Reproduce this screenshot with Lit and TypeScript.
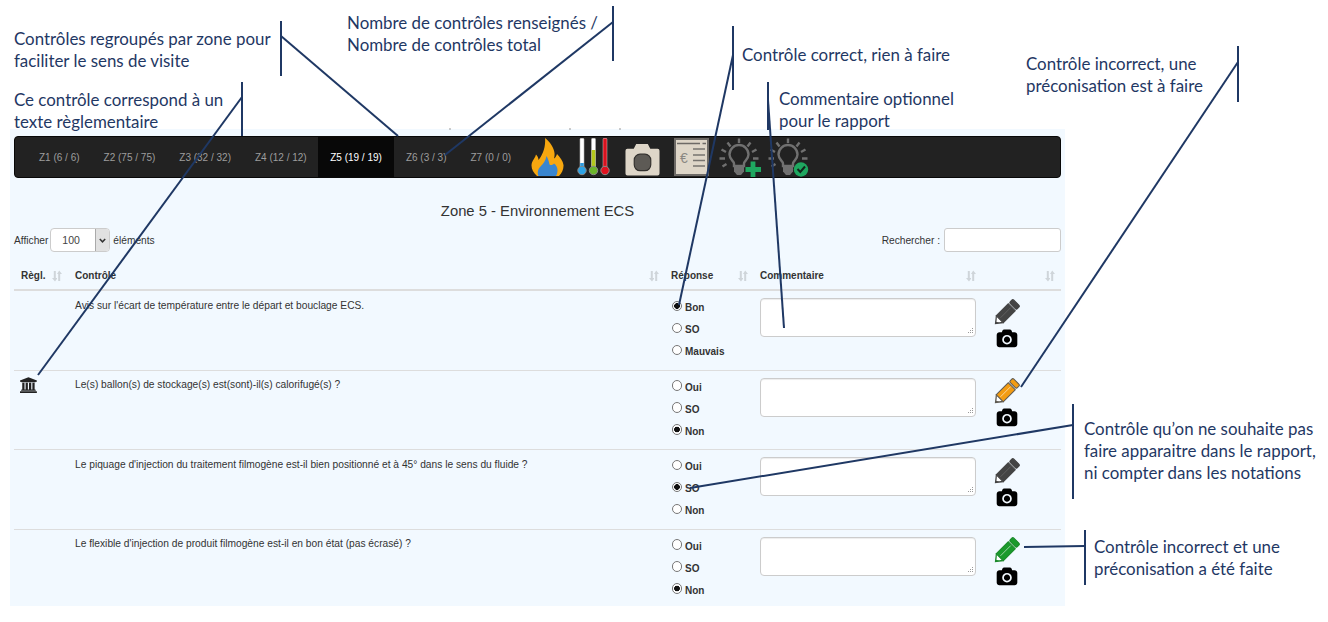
import { LitElement, html, css, svg } from "lit";
import { customElement } from "lit/decorators.js";

const TABS = [
  { label: "Z1 (6 / 6)" }, { label: "Z2 (75 / 75)" }, { label: "Z3 (32 / 32)" }, { label: "Z4 (12 / 12)" },
  { label: "Z5 (19 / 19)", active: true }, { label: "Z6 (3 / 3)" }, { label: "Z7 (0 / 0)" },
];

const ROWS = [
  { reg: false, text: "Avis sur l'écart de température entre le départ et bouclage ECS.", opts: ["Bon", "SO", "Mauvais"], sel: 0, pen: "dark" },
  { reg: true, text: "Le(s) ballon(s) de stockage(s) est(sont)-il(s) calorifugé(s) ?", opts: ["Oui", "SO", "Non"], sel: 2, pen: "orange" },
  { reg: false, text: "Le piquage d'injection du traitement filmogène est-il bien positionné et à 45° dans le sens du fluide ?", opts: ["Oui", "SO", "Non"], sel: 1, pen: "dark" },
  { reg: false, text: "Le flexible d'injection de produit filmogène est-il en bon état (pas écrasé) ?", opts: ["Oui", "SO", "Non"], sel: 2, pen: "green" },
];

const NOTES = [
  { x: 14, y: 28, lines: ["Contrôles regroupés par zone pour", "faciliter le sens de visite"] },
  { x: 14, y: 89, lines: ["Ce contrôle correspond à un", "texte règlementaire"] },
  { x: 347, y: 12, lines: ["Nombre de contrôles renseignés /", "Nombre de contrôles total"] },
  { x: 742, y: 44, lines: ["Contrôle correct, rien à faire"] },
  { x: 779, y: 88, lines: ["Commentaire optionnel", "pour le rapport"] },
  { x: 1026, y: 53, lines: ["Contrôle incorrect, une", "préconisation est à faire"] },
  { x: 1084, y: 418, lines: ["Contrôle qu’on ne souhaite pas", "faire apparaitre dans le rapport,", "ni compter dans les notations"] },
  { x: 1094, y: 536, lines: ["Contrôle incorrect et une", "préconisation a été faite"] },
];

const LEADERS: number[][] = [
  [242, 82, 242, 136], [242, 97, 38, 375],
  [281, 21, 281, 76], [281, 36, 398, 136],
  [613, 6, 613, 61], [613, 22, 445, 155],
  [733, 26, 733, 90], [733, 55, 679, 305],
  [768, 82, 768, 130], [768, 100, 784, 328],
  [1238, 46, 1238, 102], [1238, 62, 1021, 387],
  [1073, 404, 1073, 499], [1073, 425, 690, 488],
  [1085, 530, 1085, 585], [1085, 546, 1024, 547],
];

const sortIcon = html`<svg class="sort" viewBox="0 0 10 12" aria-hidden="true">
  <path d="M1.800 1v7H0L3 11.500 5 8.700V8H3.800V1zM6.200 11V4H5L7.200 .5 10 4H8.200v7z" fill="#cfd5da"/>
</svg>`;

const PEN_COLORS: Record<string, { fill: string; edge: string }> = {
  dark: { fill: "#444444", edge: "#444444" },
  orange: { fill: "#f39c12", edge: "#5e5a52" },
  green: { fill: "#1b9a2c", edge: "#1b8a2a" },
};

function pencil(kind: string) {
  const c = PEN_COLORS[kind];
  return html`<svg class="pen" viewBox="0 0 26 26" aria-hidden="true">
    <g transform="translate(.8 25.200) rotate(-45)">
      <path d="M0 0L7 -5.500V5.500Z" fill="${c.edge}"/>
      <path d="M2.800 -.4L7 -4V3.500L4.500 1.800Z" fill="#ffffff"/>
      <rect x="7" y="-5" width="17" height="10" fill="${c.fill}" stroke="${c.edge}" stroke-width="1"/>
      <path d="M8.500 -.5H23" stroke="${kind === "dark" ? "#707070" : "#ffffff"}" stroke-opacity=".6" stroke-width=".9"/>
      <rect x="25.500" y="-5" width="5" height="10" rx="1.500" fill="${c.fill}" stroke="${c.edge}" stroke-width="1"/>
    </g>
  </svg>`;
}

const camera = html`<svg class="cam" viewBox="0 0 2048 1792" aria-hidden="true">
  <path fill="#000" d="M1024 672q119 0 203.500 84.500t84.500 203.500-84.500 203.500-203.500 84.500-203.500-84.500-84.500-203.500 84.500-203.500 203.500-84.500zm704-416q106 0 181 75t75 181v896q0 106-75 181t-181 75h-1408q-106 0-181-75t-75-181v-896q0-106 75-181t181-75h224l51-136q19-49 69.500-84.500t103.500-35.500h512q53 0 103.500 35.500t69.500 84.500l51 136h224zm-704 1152q185 0 316.500-131.500t131.500-316.500-131.500-316.500-316.500-131.500-316.500 131.500-131.500 316.500 131.500 316.500 316.500 131.500z"/>
</svg>`;

const bank = html`<svg class="bank" viewBox="0 0 2048 1792" aria-hidden="true">
  <path fill="#222" d="M960 0l960 384v128h-128q0 26-20.500 45t-48.500 19h-1526q-28 0-48.500-19t-20.500-45h-128v-128zm-704 640h256v768h128v-768h256v768h128v-768h256v768h128v-768h256v768h59q28 0 48.500 19t20.500 45v64h-1664v-64q0-26 20.500-45t48.500-19h59v-768zm1595 960q28 0 48.500 19t20.500 45v128h-1920v-128q0-26 20.500-45t48.500-19h1782z"/>
</svg>`;

const flame = html`<svg class="ni" style="width:33px;height:38px" viewBox="0 0 33 38" aria-hidden="true">
  <path fill="#f7a70f" d="M6 38C1.500 34 -.5 29 1 24.500 2 21.500 4.500 19.500 5 16.500 6.500 18 7.500 20 7.500 22 11 18 15 10 14 0c5 4 9 9.500 9.500 15 .2 2 0 4-.5 5.500 1.500-.8 2.500-2.800 3-4.500 3 3 6 7 6.500 11 .3 4-1.500 8-4.500 11Z"/>
  <path fill="#3a86cf" d="M7.500 38C6 34.500 7 31 9.500 28.500c2.500-2.500 5-5.500 6-10.500 1.800 3 2.500 6 3 8.500 1.500 1 3.500 .5 4.500-1 2.200 1.500 3.500 4 3.500 6.500 0 2-.5 4.500-1.500 6Z"/>
</svg>`;

const thermo = html`<svg class="ni" style="width:34px;height:38px" viewBox="0 0 34 38" aria-hidden="true">
  ${[
    { x: 5, fillFrom: 25, fill: "#2d9be0", bulb: "#2da3e6" },
    { x: 16.500, fillFrom: 12, fill: "#b4c81c", bulb: "#6bb52a" },
    { x: 28, fillFrom: 0.500, fill: "#d8121f", bulb: "#e0121f" },
  ].map(
    (t) => svg`
    <rect x="${t.x - 2.400}" y="0" width="4.800" height="31" rx="1.500" fill="#8a8a8a"/>
    <rect x="${t.x - 1.800}" y=".5" width="3.600" height="30" fill="#ffffff"/>
    <rect x="${t.x - 1.800}" y="${t.fillFrom}" width="3.600" height="${30.5 - t.fillFrom}" fill="${t.fill}"/>
    <circle cx="${t.x}" cy="32.500" r="4.200" fill="${t.bulb}" stroke="#8a8a8a" stroke-width="1"/>`
  )}
</svg>`;

const beigeCam = html`<svg class="ni" style="width:35px;height:33px" viewBox="0 0 36 33" aria-hidden="true">
  <path fill="#ded6c8" d="M2.500 5.500H9L11.500.5H23.500L26 5.500H33.500Q35.500 5.500 35.500 7.500V31Q35.500 33 33.500 33H2.500Q.5 33 .5 31V7.500Q.5 5.500 2.500 5.500Z"/>
  <rect x="9.500" y="11" width="17" height="17" rx="6" fill="#5d5a55" stroke="#33312e" stroke-width="1.200"/>
</svg>`;

const invoice = html`<svg class="ni" style="width:35px;height:38px" viewBox="0 0 35 38" aria-hidden="true">
  <rect x="1" y="1" width="33" height="36" fill="#ded6c8" stroke="#6d6a66" stroke-width="2"/>
  <path d="M3 5.500H26M28.500 5.500H32" stroke="#6d6a66" stroke-width="1.600" fill="none"/>
  <path d="M19 11H31M19 17H31M19 22.500H31M19 28H31" stroke="#77746f" stroke-width="1.600" fill="none"/>
  <text x="6" y="25" font-family="Liberation Sans, sans-serif" font-size="14" fill="#8a8782">€</text>
</svg>`;

const bulbBody = svg`
  <path d="M15 28V25.500C15 23 10.500 21.500 10.500 16.500A9.500 9.500 0 0 1 29.500 16.500C29.500 21.500 25 23 25 25.500V28Z" fill="none" stroke="#707070" stroke-width="2.400"/>
  <path d="M15 29H25V33.500L22 37H18L15 33.500Z" fill="#707070"/>
  <path d="M20 .5V5M8.500 4.500L11.500 8.500M31.500 4.500L28.500 8.500M2.500 11.500L7 14M37.500 11.500L33 14M.5 20.500H6M34 20.500H39.500M3.500 28.500L7.500 26" stroke="#707070" stroke-width="2.400" fill="none"/>
`;

const bulbPlus = html`<svg class="ni" style="width:43px;height:39px" viewBox="0 0 43 39" aria-hidden="true">
  ${bulbBody}
  <path d="M34 23.500V39M26.500 31.500H42" stroke="#1fa760" stroke-width="4.800" fill="none"/>
</svg>`;

const bulbCheck = html`<svg class="ni" style="width:41px;height:39px" viewBox="0 0 41 39" aria-hidden="true">
  ${bulbBody}
  <circle cx="33" cy="31.500" r="7.200" fill="#1fa760"/>
  <path d="M29.500 31L32.300 34 37 28.500" stroke="#12261c" stroke-width="2" fill="none"/>
</svg>`;

const grip = html`<svg class="grip" viewBox="0 0 7 7" aria-hidden="true">
  <path d="M5 0h1v1H5zM3 2h1v1H3zM5 2h1v1H5zM1 4h1v1H1zM3 4h1v1H3zM5 4h1v1H5z" fill="#9a9a9a"/>
</svg>`;

@customElement("app-root")
export class AppRoot extends LitElement {
  static styles = css`
    :host {
      display: block;
      position: relative;
      width: 1328px;
      height: 622px;
      overflow: hidden;
      background: #fff;
      font-family: "Liberation Sans", Arial, sans-serif;
      font-size: 10px;
      color: #333;
    }
    .page { padding: 129px 0 0 10px; }
    .panel {
      width: 1055px;
      height: 477px;
      box-sizing: border-box;
      padding: 7px 4px 0;
      background: #f2f9ff;
    }
    .nav {
      display: flex;
      align-items: center;
      height: 42px;
      box-sizing: border-box;
      background: #222;
      border: 1px solid #080808;
      border-radius: 4px;
      padding-left: 12px;
    }
    .tab {
      display: flex;
      align-items: center;
      align-self: stretch;
      padding: 0 12px;
      color: #9d9d9d;
      white-space: nowrap;
    }
    .tab.active { background: #080808; color: #fff; }
    .tab:nth-child(5) { margin-left: -0.500px; }
    .tools { display: flex; align-items: center; margin-left: 7.500px; }
    .ni { display: block; flex: none; }
    .tools .ni:nth-child(2) { margin-left: 13px; }
    .tools .ni:nth-child(3) { margin-left: 14px; margin-top: 4px; }
    .tools .ni:nth-child(4) { margin-left: 14px; }
    .tools .ni:nth-child(5) { margin-left: 10px; }
    .tools .ni:nth-child(6) { margin-left: 6px; }
    h2 {
      margin: 25px 0 0;
      height: 16px;
      line-height: 16px;
      text-align: center;
      font-size: 14.800px;
      font-weight: 400;
      color: #333;
    }
    .filters {
      display: flex;
      justify-content: space-between;
      align-items: center;
      margin-top: 9px;
      height: 24px;
      font-size: 10.200px;
    }
    .group { display: flex; align-items: center; }
    .pick { position: relative; width: 60px; height: 24px; margin: 0 3px 0 2px; }
    select {
      appearance: none;
      width: 100%;
      height: 100%;
      box-sizing: border-box;
      border: 1px solid #ccc;
      border-radius: 4px;
      background: #fff;
      padding: 0 0 0 11px;
      font: 10.500px "Liberation Sans", Arial, sans-serif;
      color: #444;
    }
    .arrow {
      position: absolute;
      top: 1px;
      right: 1px;
      bottom: 1px;
      width: 13px;
      display: flex;
      align-items: center;
      justify-content: center;
      background: #e1e1e1;
      border-left: 1px solid #aaa;
      border-radius: 0 3px 3px 0;
      pointer-events: none;
    }
    .arrow svg { width: 7px; height: 5px; display: block; }
    .search {
      width: 117px;
      height: 24px;
      box-sizing: border-box;
      margin-left: 4px;
      border: 1px solid #ccc;
      border-radius: 3px;
      background: #fff;
    }
    .grid { display: grid; grid-template-columns: 61px 596px 89px 234px 67px; }
    .head {
      margin-top: 11px;
      height: 28px;
      box-sizing: border-box;
      border-bottom: 2px solid #ddd;
      font-weight: 700;
    }
    .th {
      display: flex;
      align-items: center;
      justify-content: space-between;
      padding: 0 12px 1px 0;
      height: 100%;
      box-sizing: border-box;
    }
    .th:first-child { padding-left: 7px; padding-right: 13px; }
    .th:nth-child(4) { padding-right: 18px; }
    .th:last-child { padding-right: 6px; }
    .sort { width: 10px; height: 12px; display: block; }
    .row {
      height: 79.500px;
      box-sizing: border-box;
      border-bottom: 1px solid #ddd;
    }
    .row:last-child { border-bottom: 0; }
    .reg { padding: 6.500px 0 0 6.300px; }
    .bank { width: 18px; height: 16px; display: block; }
    .q { padding-top: 8.500px; line-height: 12px; font-size: 10.230px; }
    .answers { padding-top: 4px; }
    .opt { display: flex; align-items: center; height: 22px; font-weight: 700; }
    .opt input {
      appearance: none;
      width: 10.500px;
      height: 10.500px;
      margin: 0 3px 0 .5px;
      box-sizing: border-box;
      border: 1px solid #777;
      border-radius: 50%;
      background: #fff;
    }
    .opt input:checked { background: radial-gradient(circle, #111 0 2.600px, #fff 3.100px); }
    .opt span { padding-top: 3px; }
    .box { position: relative; width: 216px; height: 39px; margin-top: 7px; }
    textarea {
      display: block;
      width: 100%;
      height: 100%;
      box-sizing: border-box;
      resize: none;
      border: 1px solid #ccc;
      border-radius: 4px;
      background: #fff;
      box-shadow: inset 0 1px 1px rgba(0, 0, 0, 0.075);
    }
    .grip { position: absolute; right: 2px; bottom: 2px; width: 7px; height: 7px; }
    .acts { display: flex; flex-direction: column; align-items: flex-start; padding-top: 7.500px; }
    .pen { width: 26px; height: 26px; display: block; }
    .cam { width: 22px; height: 20px; display: block; margin: 4px 0 0 2px; }
    .leaders {
      position: absolute;
      inset: 0;
      width: 1328px;
      height: 622px;
      pointer-events: none;
    }
    .note {
      position: absolute;
      font-family: Lato, sans-serif;
      font-size: 16.900px;
      line-height: 22px;
      color: #1f3864;
      white-space: nowrap;
    }
  `;

  render() {
    return html`
      <div class="page">
        <section class="panel">
          <nav class="nav">
            ${TABS.map((t) => html`<div class="tab ${t.active ? "active" : ""}">${t.label}</div>`)}
            <div class="tools">${flame}${thermo}${beigeCam}${invoice}${bulbPlus}${bulbCheck}</div>
          </nav>
          <h2>Zone 5 - Environnement ECS</h2>
          <div class="filters">
            <div class="group">
              Afficher
              <div class="pick">
                <select><option>100</option></select>
                <span class="arrow"><svg viewBox="0 0 7 5"><path d="M.8 1L3.500 3.800 6.200 1" fill="none" stroke="#333" stroke-width="1.500"/></svg></span>
              </div>
              éléments
            </div>
            <div class="group">Rechercher :<input class="search" type="text" /></div>
          </div>
          <div class="grid head">
            ${["Règl.", "Contrôle", "Réponse", "Commentaire", ""].map((h) => html`<div class="th"><span>${h}</span>${sortIcon}</div>`)}
          </div>
          ${ROWS.map(
            (r, i) => html`
              <div class="grid row">
                <div class="reg">${r.reg ? bank : ""}</div>
                <div class="q">${r.text}</div>
                <div class="answers">
                  ${r.opts.map(
                    (o, j) => html`<label class="opt"><input type="radio" name="r${i}" ?checked=${j === r.sel} /><span>${o}</span></label>`
                  )}
                </div>
                <div><div class="box"><textarea></textarea>${grip}</div></div>
                <div class="acts">${pencil(r.pen)}${camera}</div>
              </div>
            `
          )}
        </section>
      </div>
      <svg class="leaders" viewBox="0 0 1328 622" aria-hidden="true">
        ${LEADERS.map((l) => svg`<line x1="${l[0]}" y1="${l[1]}" x2="${l[2]}" y2="${l[3]}" stroke="#1f3864" stroke-width="2"/>`)}
        <path d="M449 129h2M569 129h2M619 129h2" stroke="#999" stroke-width="1"/>
      </svg>
      ${NOTES.map(
        (n) => html`<div class="note" style="left:${n.x}px;top:${n.y}px">${n.lines.map((l) => html`<div>${l}</div>`)}</div>`
      )}
    `;
  }
}
